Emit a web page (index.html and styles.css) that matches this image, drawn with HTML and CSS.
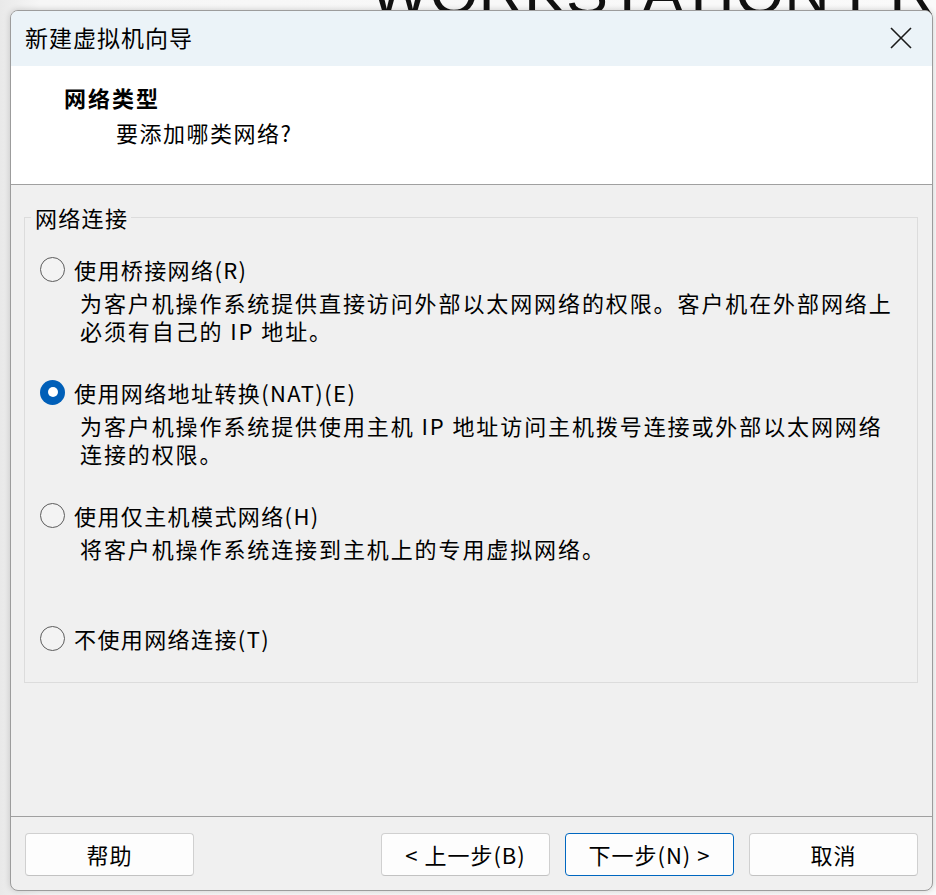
FILE: index.html
```html
<!DOCTYPE html>
<html lang="zh-CN">
<head>
<meta charset="utf-8">
<title>新建虚拟机向导</title>
<link rel="stylesheet" href="styles.css">
</head>
<body>
<div class="bgtext"><div class="bgtext-inner">WORKSTATION PRO</div></div>
<div class="dialog">
  <div class="titlebar">
    <span class="title">新建虚拟机向导</span>
    <span class="close">
      <svg width="24" height="24" viewBox="0 0 24 24"><path d="M2 2 L22 22 M22 2 L2 22" stroke="#1a1a1a" stroke-width="1.6" fill="none"/></svg>
    </span>
  </div>
  <div class="header">
    <div class="h-title">网络类型</div>
    <div class="h-sub">要添加哪类网络?</div>
  </div>
  <div class="body">
    <fieldset class="group">
      <legend class="legend">网络连接</legend>
      <div class="option">
        <div class="opt-label"><span class="radio"></span><span>使用桥接网络(R)</span></div>
        <div class="opt-desc">为客户机操作系统提供直接访问外部以太网网络的权限。客户机在外部网络上<br>必须有自己的 IP 地址。</div>
      </div>
      <div class="option">
        <div class="opt-label"><span class="radio checked"></span><span>使用网络地址转换(NAT)(E)</span></div>
        <div class="opt-desc">为客户机操作系统提供使用主机 IP 地址访问主机拨号连接或外部以太网网络<br>连接的权限。</div>
      </div>
      <div class="option">
        <div class="opt-label"><span class="radio"></span><span>使用仅主机模式网络(H)</span></div>
        <div class="opt-desc">将客户机操作系统连接到主机上的专用虚拟网络。</div>
      </div>
      <div class="option last">
        <div class="opt-label"><span class="radio"></span><span>不使用网络连接(T)</span></div>
      </div>
    </fieldset>
  </div>
  <div class="footer">
    <button class="btn">帮助</button>
    <button class="btn push">&lt; 上一步(B)</button>
    <button class="btn primary">下一步(N) &gt;</button>
    <button class="btn">取消</button>
  </div>
</div>
</body>
</html>
```

FILE: styles.css
```css
html, body {
  margin: 0;
  padding: 0;
}
body {
  width: 936px;
  height: 895px;
  overflow: hidden;
  background: linear-gradient(90deg, #e9e9e9 0px, #f6f6f6 40px, #fafafa 100%);
  font-family: "Noto Sans CJK SC", "Noto Sans", sans-serif;
  color: #000;
  padding: 10px 0 0 10px;
  box-sizing: border-box;
  position: relative;
}
.bgtext {
  position: absolute;
  left: 370px;
  right: 0;
  top: 0;
  height: 40px;
  overflow: hidden;
  font-family: "Liberation Sans", Arial, sans-serif;
  font-size: 63px;
  line-height: 60px;
  color: #111;
  white-space: nowrap;
  z-index: 0;
}
.bgtext-inner {
  margin-top: -38px;
}
.dialog {
  position: relative;
  z-index: 1;
  width: 923px;
  height: 881px;
  box-sizing: border-box;
  border: 1px solid #9c9c9c;
  border-radius: 8px;
  background: #f0f0f0;
  overflow: hidden;
  display: flex;
  flex-direction: column;
  box-shadow: 0 0 6px rgba(0, 0, 0, 0.18);
}
.titlebar {
  height: 55px;
  flex: none;
  background: #ebf3f8;
  display: flex;
  align-items: center;
  justify-content: space-between;
  padding: 0 19px 0 14px;
}
.title {
  font-size: 23px;
  letter-spacing: 1px;
  line-height: 30px;
  margin-top: -3px;
}
.close {
  display: flex;
  width: 24px;
  height: 24px;
  margin-top: -1px;
}
.header {
  flex: none;
  box-sizing: border-box;
  background: #fff;
  border-bottom: 1px solid #a0a0a0;
  padding: 15px 0 0 53px;
  height: 119px;
}
.h-title {
  font-size: 22px;
  letter-spacing: 2px;
  line-height: 32px;
  font-weight: bold;
}
.h-sub {
  font-size: 22px;
  letter-spacing: 1.5px;
  line-height: 32px;
  margin-top: 3px;
  padding-left: 52px;
}
.body {
  flex: 1;
  padding: 18px 14px 0 13px;
  border-bottom: 1px solid #a0a0a0;
}
.group {
  margin: 0;
  border: 1px solid #dcdcdc;
  padding: 22px 0 28px 15px;
  min-width: 0;
}
.legend {
  font-size: 22px;
  letter-spacing: 1.3px;
  line-height: 28px;
  padding: 0 3px 0 4px;
  margin-left: -9px;
}
.option {
  margin-bottom: 32px;
}
.option.last {
  margin-bottom: 0;
}
.opt-label {
  display: flex;
  align-items: center;
  gap: 9px;
  height: 32px;
  font-size: 22px;
  letter-spacing: 1.4px;
  line-height: 32px;
  white-space: nowrap;
}
.radio {
  width: 25px;
  height: 25px;
  box-sizing: border-box;
  border: 1.5px solid #5c5c5c;
  border-radius: 50%;
  background: #f3f3f3;
  flex: none;
  display: flex;
  align-items: center;
  justify-content: center;
}
.radio.checked {
  border: none;
  background: #005fb8;
}
.radio.checked::after {
  content: "";
  width: 10px;
  height: 10px;
  border-radius: 50%;
  background: #fff;
}
.opt-desc {
  margin-top: 3px;
  min-height: 56px;
  padding-left: 40px;
  font-size: 22px;
  letter-spacing: 1.9px;
  line-height: 28px;
  white-space: nowrap;
}
.footer {
  height: 73px;
  flex: none;
  box-sizing: border-box;
  display: flex;
  align-items: flex-start;
  gap: 15px;
  padding: 16px 14px 0 14px;
}
.btn {
  width: 169px;
  height: 43px;
  box-sizing: border-box;
  border: 1px solid #d0d0d0;
  border-bottom-color: #c2c2c2;
  border-radius: 4px;
  background: #fdfdfd;
  font-family: "Noto Sans CJK SC", "Noto Sans", sans-serif;
  font-size: 22px;
  letter-spacing: 1px;
  color: #000;
  padding: 0;
  line-height: 41px;
}
.btn.push {
  margin-left: auto;
}
.btn.primary {
  border: 1px solid #0067c0;
}
```
